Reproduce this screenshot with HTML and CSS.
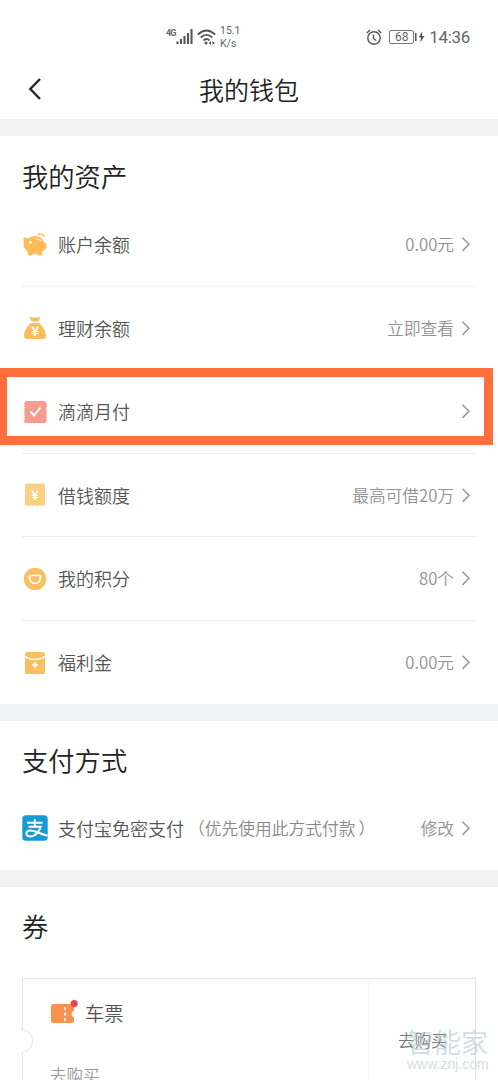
FILE: index.html
```
<!DOCTYPE html>
<html lang="zh-CN">
<head>
<meta charset="utf-8">
<title>我的钱包</title>
<link rel="stylesheet" href="styles.css">
</head>
<body>
<svg class="defs" aria-hidden="true"><symbol id="arrow" viewBox="0 0 10 16"><path d="M1.500 1.700 8 8.300l-6.500 6.600" fill="none" stroke="#999" stroke-width="1.500"/></symbol></svg>
<div class="screen">
  <header class="status">
    <div class="status-left">
      <span class="net">4G</span>
      <svg class="signal" width="17" height="16" viewBox="0 0 17 16"><path d="M1.500 12.500V15M5 10V15M8.500 7V15M12 4V15M15.500 0V15" stroke="#555" stroke-width="2.100" fill="none"/></svg>
      <svg class="wifi" width="19" height="16" viewBox="0 0 19 16"><g fill="none" stroke="#555" stroke-width="1.800"><path d="M.8 5.500Q9.500-2.500 18.200 5.500M3.700 8.500Q9.500 3.200 15.300 8.500M6.500 11.500Q9.500 8.500 12.500 11.500"/></g><circle cx="9" cy="14" r="1.500" fill="#555"/><path d="M14 12v4l-2.400-2zM15.500 12v4l2.400-2z" fill="#555"/></svg>
      <span class="speed"><span>15.1</span><span>K/s</span></span>
    </div>
    <div class="status-right">
      <svg width="16" height="17" viewBox="0 0 16 17"><g fill="none" stroke="#555" stroke-width="1.400"><circle cx="8" cy="9" r="6.200"/><path d="M7.500 5.500V9.500l2.700 2M.8 4 4 1M12 1l3.200 3"/></g></svg>
      <span class="battery">68</span>
      <svg class="charge" width="10" height="14" viewBox="0 0 10 14"><path d="M.8 3v8" stroke="#555" stroke-width="1.500"/><path d="M7.300 1.500 3.700 7.500H6l-.7 5L9.500 6H7z" fill="#555"/></svg>
      <span class="clock">14:36</span>
    </div>
  </header>
  <nav class="nav">
    <svg class="back" width="15" height="24" viewBox="0 0 15 24"><path d="M13 2 3.300 12l9.700 10" fill="none" stroke="#292929" stroke-width="2.500"/></svg>
    <h1>我的钱包</h1>
  </nav>

  <section class="panel assets">
    <h2>我的资产</h2>
    <div class="row">
      <svg class="icon" viewBox="0 0 24 24"><path d="M1 9.500C.7 6 1.200 4.500 2 4.500l3 1.600C9 2.500 17 2.500 20 7.500c1 1.500 1.300 3 3 3.500v4.500l-2.500 1.300-2 2.200v3h-3.500l-.8-1.500H10L9 22H5.500v-3C3 17.500 2.800 14.500 1 14z" fill="#fbbd59" stroke="#fbbd59" stroke-width=".8" stroke-linejoin="round"/><path d="M14.500 2Q18-.5 21.500 3.500" fill="none" stroke="#fbbd59" stroke-width="1.300"/><path d="M12.500 6q3.500 0 6 2" fill="none" stroke="#fff0c8" stroke-width="1.200"/><circle cx="7.500" cy="9.500" r="1.200" fill="#fff"/></svg>
      <span class="label">账户余额</span><span class="value">0.00元</span><svg class="arrow"><use href="#arrow"/></svg>
    </div>
    <div class="row">
      <svg class="icon" viewBox="0 0 24 24"><path d="M6.500 1q5.500 1.200 11 0l-2 4.500h-7zM8 7h8c3.500 3 7 8 7 12.500 0 2.500-1.200 3.500-3.500 3.500h-15C2 23 1 22 1 19.500 1 15 4.500 10 8 7z" fill="#f8bd60"/><text class="yen" x="12" y="20">¥</text></svg>
      <span class="label">理财余额</span><span class="value">立即查看</span><svg class="arrow"><use href="#arrow"/></svg>
    </div>
    <div class="row featured">
      <svg class="icon" viewBox="0 0 24 24"><path d="M3 1h18q2.500 0 2.500 2.500v17Q23.500 23 21 23H3Q1 23 1 21l1-1.500-1-1.500 1-1.500L1 15l1-1.500L1 12l1-1.500L1 9l1-1.500L1 6l1-1.500L1 3z" fill="#f69b8f"/><path d="m7.500 11.500 3.500 4 6.500-8" fill="none" stroke="#fff" stroke-width="1.900"/></svg>
      <span class="label">滴滴月付</span><span class="value"></span><svg class="arrow"><use href="#arrow"/></svg>
    </div>
    <div class="row">
      <svg class="icon" viewBox="0 0 24 24"><path d="M4 .5h16q2 0 2 2V23l-2-1-2 1-2-1-2 1-2-1-2 1-2-1-2 1-2-1-2 1H2V2.500q0-2 2-2z" fill="#fad184"/><text class="yen" x="12" y="16.500">¥</text></svg>
      <span class="label">借钱额度</span><span class="value">最高可借20万</span><svg class="arrow"><use href="#arrow"/></svg>
    </div>
    <div class="row">
      <svg class="icon" viewBox="0 0 24 24"><circle cx="12" cy="12" r="11.200" fill="#f8bf65"/><path d="M7.500 8.500h9q1.200 0 1 1.500-.5 6.500-5.500 6.500T6.500 10q-.2-1.500 1-1.500z" fill="none" stroke="#fff" stroke-width="1.700"/></svg>
      <span class="label">我的积分</span><span class="value">80个</span><svg class="arrow"><use href="#arrow"/></svg>
    </div>
    <div class="row">
      <svg class="icon" viewBox="0 0 24 24"><path d="M2 4q0-3 3-3h14q3 0 3 3v17q0 2-2 2H4q-2 0-2-2z" fill="#f8be60"/><path d="M1.500 5.500q10.500 6 21 0" fill="none" stroke="#fffaf0" stroke-width="1.600"/><path d="m12 10.500 1.200 2.300 2.300 1.200-2.300 1.200L12 17.500l-1.200-2.300L8.500 14l2.300-1.200z" fill="#fff"/></svg>
      <span class="label">福利金</span><span class="value">0.00元</span><svg class="arrow"><use href="#arrow"/></svg>
    </div>
  </section>

  <section class="panel payment">
    <h2>支付方式</h2>
    <div class="row">
      <svg class="icon alipay" viewBox="0 0 26 26"><rect x=".3" y=".3" width="25.400" height="25.400" rx="3.500" fill="#1799d4"/><path d="M5 7.800h15.500M12.800 4.300v7.200M6.500 11.700h12.200C17.800 15.500 13.500 21.500 8.300 21.500c-5.500 0-5-6 .2-6 4.500 0 8.500 3.200 17 5.200" fill="none" stroke="#fff" stroke-width="2"/></svg>
      <span class="label">支付宝免密支付</span><span class="note">（优先使用此方式付款<span class="close">）</span></span><span class="value">修改</span><svg class="arrow"><use href="#arrow"/></svg>
    </div>
  </section>

  <section class="panel coupons">
    <h2>券</h2>
    <div class="ticket">
      <div class="ticket-main">
        <div class="ticket-title">
          <svg width="28" height="26" viewBox="0 0 28 26"><path d="M3.500 4h19q1.500 0 1.500 2v4.500q-2.500 1-2.500 3.500t2.500 3.500V21q0 2-2 2H3.500Q1 23 1 20.500v-14Q1 4 3.500 4z" fill="#f99150"/><path d="M15 7v15" stroke="#fff" stroke-width="1.600" stroke-dasharray="3 2.500"/><circle cx="24.200" cy="3.600" r="3.500" fill="#e84452"/></svg>
          <span>车票</span>
        </div>
        <div class="ticket-sub">去购买</div>
      </div>
      <div class="ticket-action">去购买</div>
      <span class="notch"></span>
    </div>
  </section>
  <div class="watermark"><b>智能家</b><span>www.znj.com</span></div>
</div>
</body>
</html>
```
FILE: styles.css
```
*, *::after { box-sizing: border-box; }
body {
  margin: 0;
  background: #fff;
  color: #222;
  font-family: "Noto Sans CJK SC", sans-serif;
  font-weight: 350;
}
.defs { position: absolute; width: 0; height: 0; }
.screen { position: relative; width: 498px; height: 1080px; overflow: hidden; }
.status {
  height: 60px;
  padding: 13px 27px 0 166px;
  display: flex;
  justify-content: space-between;
  color: #666;
  font-family: Roboto, sans-serif;
  font-weight: 400;
}
.status-left, .status-right { display: flex; align-items: center; height: 48px; }
.net { font-size: 9px; font-weight: 700; line-height: 10px; width: 10px; letter-spacing: -1px; margin-bottom: 9px; }
.signal { margin-right: 4px; }
.speed { display: flex; flex-direction: column; margin-left: 4px; font-size: 10.500px; line-height: 13px; }
.battery {
  width: 25px;
  height: 14px;
  margin-left: 7px;
  border: 1px solid #777;
  border-radius: 2px;
  text-align: center;
  font-size: 12px;
  line-height: 12px;
}
.status-right { margin-right: 1px; }
.charge { margin: 0 4px 0 1px; }
.clock { font-size: 17px; line-height: 24px; letter-spacing: -.3px; }
.nav { height: 59px; position: relative; display: flex; justify-content: center; }
.nav h1 { margin: 0; font-size: 25px; line-height: 36px; margin-top: 11px; font-weight: 350; }
.back { position: absolute; left: 27px; top: 17px; }
.panel { border-top: 17px solid #f1f2f4; padding: 0 22px; }
.panel h2 { margin: 0; font-size: 26.300px; line-height: 40px; font-weight: 350; }
.assets { height: 585px; padding-top: 20px; }
.row { height: 83.500px; display: flex; align-items: center; border-bottom: 1px solid #eee; position: relative; }
.assets h2 { margin-bottom: 7px; }
.row:last-child { border-bottom: 0; }
.icon { width: 24px; height: 24px; margin: 1px 11.500px 0 .5px; flex: none; }
.alipay { width: 26px; height: 26px; margin: 0 10px 0 0; }
.label { font-size: 18px; line-height: 26px; color: #555; }
.note { margin-left: 4px; font-size: 16.750px; color: #888; }
.close { margin-left: 3px; }
.value { margin-left: auto; font-size: 16.700px; color: #929292; }
.arrow { width: 10px; height: 16px; margin: 0 5px 0 7px; flex: none; }
.yen { font: 700 13px "Noto Sans CJK SC", sans-serif; fill: #fff; text-anchor: middle; }
.featured::after {
  content: "";
  position: absolute;
  left: -22px;
  top: -2px;
  width: 493px;
  height: 77px;
  border: 9px solid #ff6f3e;
  border-left-width: 7px;
}
.payment { height: 166px; padding-top: 19px; }
.payment .row { height: 83px; margin-top: 6px; }
.coupons { padding-top: 19px; }
.ticket {
  position: relative;
  display: flex;
  height: 130px;
  margin-top: 32px;
  border: 1px solid #e6e6e6;
}
.ticket-main { flex: 1; padding: 20px 0 0 27px; }
.ticket-title { display: flex; align-items: center; gap: 7px; height: 28px; font-size: 19.300px; color: #555; }
.ticket-sub { margin-top: 36px; font-size: 16.500px; line-height: 24px; color: #999; }
.ticket-action { width: 107px; border-left: 1px solid #f3f3f3; padding: 49px 0 0 29px; font-size: 16.500px; line-height: 24px; color: #777; }
.notch {
  position: absolute;
  left: -2px;
  top: 50px;
  width: 12px;
  height: 24px;
  border: 1px solid #e6e6e6;
  border-left: 0;
  border-radius: 0 12px 12px 0;
  background: #fff;
}
.watermark {
  position: absolute;
  left: 407px;
  top: 1027px;
  width: 84px;
  display: flex;
  flex-direction: column;
  color: rgba(165, 188, 193, .5);
}
.watermark b { font-size: 27px; line-height: 30px; font-weight: 400; }
.watermark span { font: 14px/15px "Liberation Sans", sans-serif; }
```
